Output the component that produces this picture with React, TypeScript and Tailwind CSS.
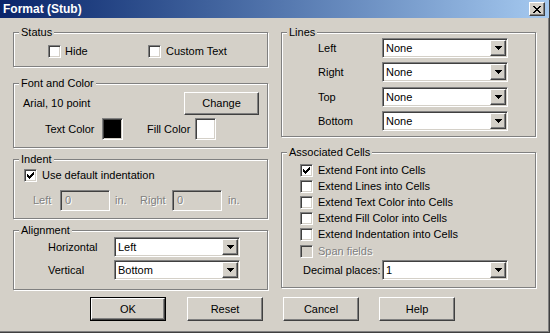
import React from "react";

const sunken =
  "border border-t-[#808080] border-l-[#808080] border-r-white border-b-white shadow-[inset_1px_1px_0_#404040,inset_-1px_-1px_0_#d4d0c8]";
const raised =
  "border border-t-white border-l-white border-r-[#404040] border-b-[#404040] shadow-[inset_-1px_-1px_0_#808080]";
const disabledText = "text-[#808080] [text-shadow:1px_1px_0_#fff]";

function Group({
  label,
  className,
  children,
}: {
  label: string;
  className: string;
  children?: React.ReactNode;
}) {
  return (
    <div
      className={`relative border border-[#808080] shadow-[1px_1px_0_#fff,inset_1px_1px_0_#fff] ${className}`}
    >
      <span className="absolute left-[5px] top-[-7px] px-[2px] bg-[#d4d0c8] leading-[13px]">
        {label}
      </span>
      {children}
    </div>
  );
}

function CheckMark() {
  const cols = [2, 3, 4, 3, 2, 1, 0];
  return (
    <svg width="7" height="7" viewBox="0 0 7 7" shapeRendering="crispEdges" className="block">
      {cols.map((y, x) => (
        <rect key={x} x={x} y={y} width="1" height="3" fill="#000" />
      ))}
    </svg>
  );
}

function Checkbox({
  label,
  checked = false,
  disabled = false,
  gap = "gap-[5px]",
}: {
  label: string;
  checked?: boolean;
  disabled?: boolean;
  gap?: string;
}) {
  return (
    <div className={`flex items-center ${gap} h-[13px]`}>
      <div
        className={`w-[13px] h-[13px] shrink-0 flex items-center justify-center ${sunken} ${
          disabled ? "bg-[#d4d0c8]" : "bg-white"
        }`}
      >
        {checked && <CheckMark />}
      </div>
      <span className={disabled ? disabledText : ""}>{label}</span>
    </div>
  );
}

function Arrow() {
  return (
    <svg width="7" height="4" viewBox="0 0 7 4" shapeRendering="crispEdges" className="block">
      <rect x="0" y="0" width="7" height="1" fill="#000" />
      <rect x="1" y="1" width="5" height="1" fill="#000" />
      <rect x="2" y="2" width="3" height="1" fill="#000" />
      <rect x="3" y="3" width="1" height="1" fill="#000" />
    </svg>
  );
}

function Select({ value }: { value: string }) {
  return (
    <div className={`w-[126px] h-[20px] bg-white flex items-center p-[2px] ${sunken}`}>
      <span className="flex-1 pl-[1px] leading-[16px]">{value}</span>
      <div className={`w-[16px] h-[16px] -mr-[1px] bg-[#d4d0c8] flex items-center justify-center ${raised}`}>
        <Arrow />
      </div>
    </div>
  );
}

function Button({ label, isDefault = false, className = "" }: { label: string; isDefault?: boolean; className?: string }) {
  if (isDefault) {
    return (
      <div className={`w-[76px] h-[24px] border border-black ${className}`}>
        <div className={`w-full h-full flex items-center justify-center ${raised}`}>{label}</div>
      </div>
    );
  }
  return (
    <div className={`w-[76px] h-[24px] flex items-center justify-center ${raised} ${className}`}>{label}</div>
  );
}

function Swatch({ color }: { color: string }) {
  return <div className={`w-[21px] h-[22px] ${sunken} ${color}`} />;
}

function DisabledInput() {
  return (
    <div className={`w-[50px] h-[21px] bg-[#d4d0c8] flex items-center pl-[4px] ${sunken}`}>
      <span className={disabledText}>0</span>
    </div>
  );
}

export default function App() {
  return (
    <div className="w-[550px] h-[333px] bg-[#d4d0c8] border-r border-b border-r-[#404040] border-b-[#404040] shadow-[inset_-1px_-1px_0_#808080] flex flex-col font-['Liberation_Sans',Arial,sans-serif] text-[11px] leading-[13px] text-black overflow-hidden select-none">
      {/* Title bar */}
      <div className="h-[18px] shrink-0 flex items-center justify-between pl-[3px] pr-[4px] bg-linear-to-r from-[#0a246a] to-[#a6caf0]">
        <span className="text-white font-bold text-[12px] leading-[14px]">Format (Stub)</span>
        <div className={`w-[16px] h-[14px] bg-[#d4d0c8] flex items-center justify-center ${raised}`}>
          <svg width="8" height="7" viewBox="0 0 8 7" shapeRendering="crispEdges" className="block">
            <path d="M0 0h2v1h1v1h2V1h1V0h2v1H7v1H6v1H5v1h1v1h1v1h1v1H6V6H5V5H3v1H2v1H0V6h1V5h1V4h1V3H2V2H1V1H0z" fill="#000" />
          </svg>
        </div>
      </div>

      <div className="flex flex-col pl-[13px] pt-[14px]">
        <div className="flex gap-[13px]">
          {/* Left column */}
          <div className="w-[255px] flex flex-col">
            <Group label="Status" className="h-[35px]">
              <div className="flex mt-[12px] ml-[34px]">
                <div className="w-[100px]">
                  <Checkbox label="Hide" gap="gap-[4px]" />
                </div>
                <Checkbox label="Custom Text" gap="gap-[5px]" />
              </div>
            </Group>

            <Group label="Font and Color" className="h-[65px] mt-[16px]">
              <div className="flex items-center mt-[8px] ml-[9px]">
                <span className="w-[161px]">Arial, 10 point</span>
                <Button label="Change" className="!w-[75px] !h-[23px]" />
              </div>
              <div className="flex items-center mt-[3px] ml-[31px]">
                <span className="w-[57px]">Text Color</span>
                <Swatch color="bg-black" />
                <span className="w-[48px] ml-[24px]">Fill Color</span>
                <Swatch color="bg-white" />
              </div>
            </Group>

            <Group label="Indent" className="h-[60px] mt-[11px]">
              <div className="mt-[9px] ml-[10px]">
                <Checkbox label="Use default indentation" checked />
              </div>
              <div className="flex items-center mt-[8px] ml-[19px]">
                <span className={`w-[27px] ${disabledText}`}>Left</span>
                <DisabledInput />
                <span className={`w-[25px] ml-[5px] ${disabledText}`}>in.</span>
                <span className={`w-[32px] ${disabledText}`}>Right</span>
                <DisabledInput />
                <span className={`ml-[6px] ${disabledText}`}>in.</span>
              </div>
            </Group>

            <Group label="Alignment" className="h-[60px] mt-[11px]">
              <div className="flex items-center mt-[6px] ml-[34px]">
                <span className="w-[66px]">Horizontal</span>
                <Select value="Left" />
              </div>
              <div className="flex items-center mt-[3px] ml-[34px]">
                <span className="w-[66px]">Vertical</span>
                <Select value="Bottom" />
              </div>
            </Group>
          </div>

          {/* Right column */}
          <div className="w-[255px] flex flex-col">
            <Group label="Lines" className="h-[105px]">
              <div className="flex flex-col mt-[5px] ml-[36px]">
                {["Left", "Right", "Top", "Bottom"].map((l, i) => (
                  <div key={l} className={`flex items-center ${i === 0 ? "" : i === 2 ? "mt-[5px]" : "mt-[4px]"}`}>
                    <span className="w-[64px]">{l}</span>
                    <Select value="None" />
                  </div>
                ))}
              </div>
            </Group>

            <Group label="Associated Cells" className="h-[136px] mt-[15px]">
              <div className="flex flex-col gap-[3px] mt-[11px] ml-[18px]">
                <Checkbox label="Extend Font into Cells" checked />
                <Checkbox label="Extend Lines into Cells" />
                <Checkbox label="Extend Text Color into Cells" />
                <Checkbox label="Extend Fill Color into Cells" />
                <Checkbox label="Extend Indentation into Cells" />
                <div className="mt-[1px]">
                  <Checkbox label="Span fields" disabled />
                </div>
              </div>
              <div className="flex items-center mt-[2px] ml-[21px]">
                <span className="w-[79px]">Decimal places:</span>
                <Select value="1" />
              </div>
            </Group>
          </div>
        </div>

        {/* Buttons */}
        <div className="flex mt-[7px] ml-[77px]">
          <Button label="OK" isDefault />
          <Button label="Reset" className="ml-[21px]" />
          <Button label="Cancel" className="ml-[20px]" />
          <Button label="Help" className="ml-[20px]" />
        </div>
      </div>
    </div>
  );
}
